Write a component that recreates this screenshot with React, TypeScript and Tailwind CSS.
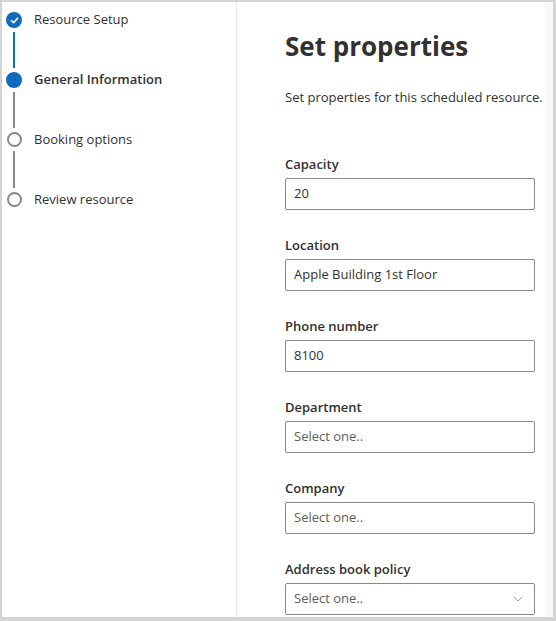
import { ChevronDown } from "lucide-react"

type Step = {
  label: string
  state: "done" | "current" | "todo"
}

const steps: Step[] = [
  { label: "Resource Setup", state: "done" },
  { label: "General Information", state: "current" },
  { label: "Booking options", state: "todo" },
  { label: "Review resource", state: "todo" },
]

type Field = {
  label: string
  value?: string
  select?: boolean
}

const fields: Field[] = [
  { label: "Capacity", value: "20" },
  { label: "Location", value: "Apple Building 1st Floor" },
  { label: "Phone number", value: "8100" },
  { label: "Department" },
  { label: "Company" },
  { label: "Address book policy", select: true },
]

const StepDot = ({ state }: { state: Step["state"] }) => {
  if (state === "done") {
    return (
      <div className="flex h-4 w-4 items-center justify-center rounded-full bg-[#0f6cbd]">
        <svg width="9" height="9" viewBox="0 0 10 10" fill="none">
          <path d="M1.5 5.2 4 7.5 8.5 2.5" stroke="white" strokeWidth="1.8" strokeLinecap="round" strokeLinejoin="round" />
        </svg>
      </div>
    )
  }
  if (state === "current") {
    return <div className="h-4 w-4 rounded-full bg-[#0f6cbd]" />
  }
  return <div className="h-[15px] w-[15px] rounded-full border-2 border-[#8a8886] bg-white" />
}

const Stepper = () => (
  <div className="flex flex-col pt-[10px] pl-[4px]">
    {steps.map((step, i) => {
      const last = i === steps.length - 1
      // the connector below a step is blue only once that step is done
      const lineColor = step.state === "done" ? "bg-[#0f6cbd]" : "bg-[#8a8886]"
      return (
        <div key={step.label} className="flex h-[60px] gap-x-3">
          <div className="flex w-4 flex-col items-center">
            <StepDot state={step.state} />
            {!last && <div className={`mt-[4px] mb-[4px] w-[2px] flex-1 ${lineColor}`} />}
          </div>
          <span
            className={`-mt-[1px] text-[13px] leading-4 text-[#323130] ${
              step.state === "current" ? "font-semibold" : ""
            }`}
          >
            {step.label}
          </span>
        </div>
      )
    })}
  </div>
)

const FormField = ({ field }: { field: Field }) => (
  <div className="flex flex-col">
    <label className="text-[13px] font-semibold leading-5 text-[#323130]">{field.label}</label>
    <div className="mt-[4px] flex h-8 w-[250px] items-center rounded-[2px] border border-[#8a8886] bg-white px-2">
      <span
        className={`flex-1 text-[13px] ${field.value ? "text-[#323130]" : "text-[#605e5c]"}`}
      >
        {field.value ?? "Select one.."}
      </span>
      {field.select && <ChevronDown className="h-4 w-4 text-[#8a8886]" strokeWidth={1.2} />}
    </div>
  </div>
)

export default function App() {
  return (
    <div
      className="h-[621px] w-[556px] bg-[#d4d4d4] pt-[2px] pl-[2px] pr-[3px] pb-[4px]"
      style={{ fontFamily: '"Open Sans", "Noto Sans", sans-serif' }}
    >
      <div className="flex h-full overflow-hidden bg-white">
        <aside className="w-[235px] shrink-0 border-r border-[#edebe9]">
          <Stepper />
        </aside>
        <main className="flex flex-1 flex-col pl-[48px] pt-[26px]">
          <h1 className="text-[26px] font-bold leading-9 text-[#323130]">Set properties</h1>
          <p className="mt-[23px] text-[13px] leading-5 text-[#323130]">
            Set properties for this scheduled resource.
          </p>
          <div className="mt-[47px] flex flex-col gap-y-[25px]">
            {fields.map((f) => (
              <FormField key={f.label} field={f} />
            ))}
          </div>
        </main>
        <div className="w-[8px] shrink-0 bg-[#f9f9f9]" />
      </div>
    </div>
  )
}
